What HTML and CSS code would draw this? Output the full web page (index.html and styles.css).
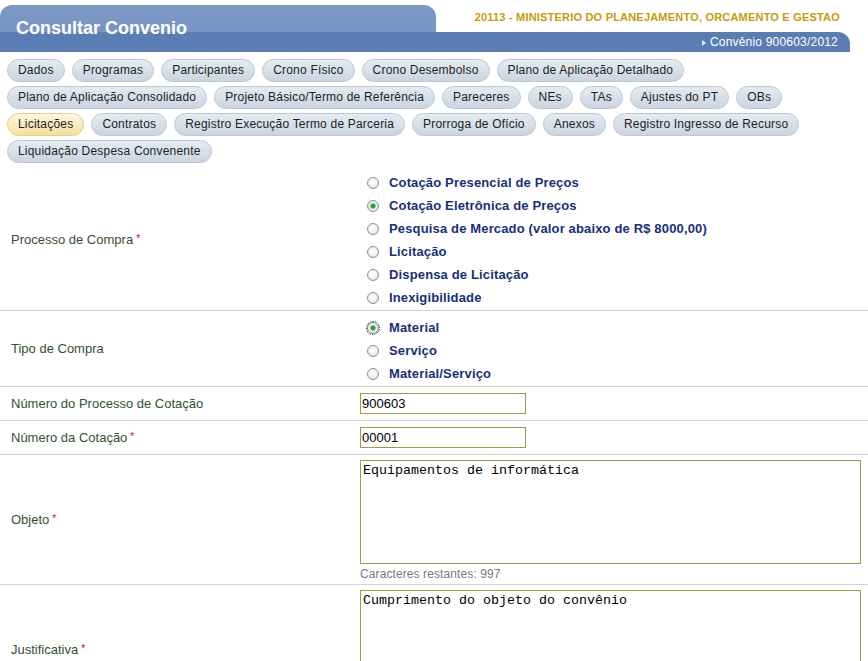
FILE: index.html
```html
<!DOCTYPE html>
<html lang="pt-BR">
<head>
<meta charset="utf-8">
<title>Consultar Convenio</title>
<link rel="stylesheet" href="styles.css">
</head>
<body>
<header class="topbar">
  <div class="title-tab"><h1 class="title">Consultar Convenio</h1></div>
  <div class="top-right">
    <div class="org">20113 - MINISTERIO DO PLANEJAMENTO, ORCAMENTO E GESTAO</div>
    <div class="conv-bar"><span class="arrow"></span>Convênio 900603/2012</div>
  </div>
</header>

<nav class="tabs">
  <a class="tab" href="#">Dados</a>
  <a class="tab" href="#">Programas</a>
  <a class="tab" href="#">Participantes</a>
  <a class="tab" href="#">Crono Físico</a>
  <a class="tab" href="#">Crono Desembolso</a>
  <a class="tab" href="#">Plano de Aplicação Detalhado</a>
  <a class="tab" href="#">Plano de Aplicação Consolidado</a>
  <a class="tab" href="#">Projeto Básico/Termo de Referência</a>
  <a class="tab" href="#">Pareceres</a>
  <a class="tab" href="#">NEs</a>
  <a class="tab" href="#">TAs</a>
  <a class="tab" href="#">Ajustes do PT</a>
  <a class="tab" href="#">OBs</a>
  <a class="tab tab-active" href="#">Licitações</a>
  <a class="tab" href="#">Contratos</a>
  <a class="tab" href="#">Registro Execução Termo de Parceria</a>
  <a class="tab" href="#">Prorroga de Ofício</a>
  <a class="tab" href="#">Anexos</a>
  <a class="tab" href="#">Registro Ingresso de Recurso</a>
  <a class="tab" href="#">Liquidação Despesa Convenente</a>
</nav>

<form class="form">
  <div class="row">
    <div class="label">Processo de Compra<span class="req">*</span></div>
    <div class="field field-radios">
      <label class="opt"><input class="radio" type="radio" name="proc"><span>Cotação Presencial de Preços</span></label>
      <label class="opt"><input class="radio" type="radio" name="proc" checked><span>Cotação Eletrônica de Preços</span></label>
      <label class="opt"><input class="radio" type="radio" name="proc"><span>Pesquisa de Mercado (valor abaixo de R$ 8000,00)</span></label>
      <label class="opt"><input class="radio" type="radio" name="proc"><span>Licitação</span></label>
      <label class="opt"><input class="radio" type="radio" name="proc"><span>Dispensa de Licitação</span></label>
      <label class="opt"><input class="radio" type="radio" name="proc"><span>Inexigibilidade</span></label>
    </div>
  </div>

  <div class="row">
    <div class="label">Tipo de Compra</div>
    <div class="field field-radios2">
      <label class="opt"><input class="radio radio-focus" type="radio" name="tipo" checked><span>Material</span></label>
      <label class="opt"><input class="radio" type="radio" name="tipo"><span>Serviço</span></label>
      <label class="opt"><input class="radio" type="radio" name="tipo"><span>Material/Serviço</span></label>
    </div>
  </div>

  <div class="row">
    <div class="label">Número do Processo de Cotação</div>
    <div class="field field-input"><input class="text-input" type="text" value="900603"></div>
  </div>

  <div class="row">
    <div class="label">Número da Cotação<span class="req">*</span></div>
    <div class="field field-input"><input class="text-input" type="text" value="00001"></div>
  </div>

  <div class="row">
    <div class="label">Objeto<span class="req">*</span></div>
    <div class="field field-area">
      <textarea class="area">Equipamentos de informática</textarea>
      <div class="hint">Caracteres restantes: 997</div>
    </div>
  </div>

  <div class="row">
    <div class="label">Justificativa<span class="req">*</span></div>
    <div class="field field-area">
      <textarea class="area">Cumprimento do objeto do convênio</textarea>
      <div class="hint">Caracteres restantes: 967</div>
    </div>
  </div>
</form>
</body>
</html>
```

FILE: styles.css
```css
* {
  box-sizing: border-box;
}

html {
  overflow: hidden;
}

body {
  margin: 0;
  background: #fff;
  color: #222;
  font-family: "Liberation Sans", Arial, sans-serif;
}

/* ---------- header ---------- */
.topbar {
  display: flex;
  height: 47px;
  margin-top: 5px;
}

.title-tab {
  width: 436px;
  border-radius: 12px 12px 0 0;
  background: linear-gradient(#7d9ac7 0, #7794c2 27px, #5a7db3 27px, #5a7db3 100%);
}

.title {
  margin: 0;
  padding: 12px 0 0 16px;
  font-size: 18px;
  line-height: 22px;
  font-weight: bold;
  color: #fff;
}

.top-right {
  width: 414px;
  display: flex;
  flex-direction: column;
}

.org {
  height: 27px;
  padding: 5px 10px 0 0;
  text-align: right;
  font-size: 11px;
  line-height: 14px;
  font-weight: bold;
  letter-spacing: 0.2px;
  color: #c99a0a;
}

.conv-bar {
  height: 20px;
  padding-right: 12px;
  border-top-right-radius: 12px;
  background: #5a7db3;
  text-align: right;
  font-size: 12px;
  line-height: 20px;
  letter-spacing: 0.2px;
  color: #fff;
}

.arrow {
  display: inline-block;
  width: 0;
  height: 0;
  margin-right: 4px;
  border-left: 4px solid #e3e9f3;
  border-top: 3px solid transparent;
  border-bottom: 3px solid transparent;
  vertical-align: 0;
}

/* ---------- tabs ---------- */
.tabs {
  display: flex;
  flex-wrap: wrap;
  gap: 4px 7px;
  padding: 7px 18px 0 7px;
}

.tab {
  height: 23px;
  padding: 0 10px;
  border: 1px solid #bcc7d4;
  border-radius: 12px;
  background: linear-gradient(#e6ebf1, #cbd4df);
  color: #1e1e1e;
  font-size: 12px;
  line-height: 21px;
  letter-spacing: 0.2px;
  text-decoration: none;
  white-space: nowrap;
}

.tab-active {
  border-color: #e6cd84;
  background: linear-gradient(#fdf7e1, #f4e0a1);
}

/* ---------- form ---------- */
.form {
  margin-top: 5px;
}

.row {
  display: grid;
  grid-template-columns: 360px 1fr;
  border-bottom: 1px solid #d2d2d2;
}

.label {
  align-self: center;
  padding-left: 11px;
  font-size: 13px;
  color: #34512f;
}

.req {
  position: relative;
  top: -2px;
  margin-left: 3px;
  font-size: 10px;
  color: #d40000;
}

.field-radios {
  padding: 3px 0 1px;
}

.field-radios2 {
  padding: 5px 0 1px;
}

.field-input {
  padding: 6px 0;
}

.field-area {
  padding: 5px 0 3px;
}

.opt {
  display: flex;
  align-items: center;
  height: 23px;
  font-size: 13px;
  font-weight: bold;
  letter-spacing: 0.15px;
  color: #17307a;
}

.radio {
  appearance: none;
  -webkit-appearance: none;
  width: 12px;
  height: 12px;
  margin: 0 10px 0 7px;
  border: 1px solid #8b9096;
  border-radius: 50%;
  background: radial-gradient(circle at 45% 40%, #ffffff 0, #f3f3f3 45%, #d3d5d8 100%);
}

.radio:checked {
  background: radial-gradient(circle at 50% 50%, #23a023 0, #23a023 1.5px, #86cc86 2.5px, #eef6ee 3.5px, #f1f1f1 50%, #d3d5d8 100%);
}

.radio-focus {
  outline: 1px dotted #222;
  outline-offset: 0;
}

.text-input {
  display: block;
  width: 166px;
  height: 21px;
  margin: 0;
  padding: 0 1px;
  border: 1px solid #a29d3c;
  background: #fff;
  color: #000;
  font-family: "Liberation Sans", Arial, sans-serif;
  font-size: 13px;
}

.area {
  display: block;
  width: 501px;
  height: 104px;
  margin: 0;
  padding: 2px;
  border: 1px solid #a29d3c;
  background: #fff;
  color: #000;
  font-family: "Liberation Mono", "Courier New", monospace;
  font-size: 13.33px;
  resize: none;
  overflow: hidden;
}

.hint {
  margin-top: 3px;
  font-size: 12px;
  line-height: 14px;
  letter-spacing: 0.1px;
  color: #7a7a7a;
}
```
